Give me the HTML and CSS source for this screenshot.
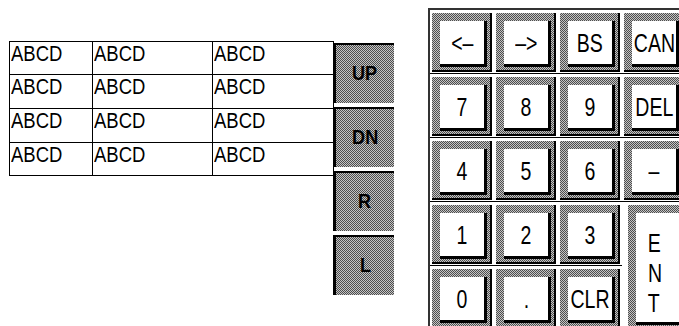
FILE: index.html
```html
<!DOCTYPE html>
<html lang="en">
<head>
  <meta charset="UTF-8">
  <title>Keypad panel</title>
  <link rel="stylesheet" href="styles.css">
</head>
<body>

  <div class="screen">

    <div class="data">
      <div class="cell"><span class="txt">ABCD</span></div>
      <div class="cell"><span class="txt">ABCD</span></div>
      <div class="cell"><span class="txt">ABCD</span></div>
      <div class="cell"><span class="txt">ABCD</span></div>
      <div class="cell"><span class="txt">ABCD</span></div>
      <div class="cell"><span class="txt">ABCD</span></div>
      <div class="cell"><span class="txt">ABCD</span></div>
      <div class="cell"><span class="txt">ABCD</span></div>
      <div class="cell"><span class="txt">ABCD</span></div>
      <div class="cell"><span class="txt">ABCD</span></div>
      <div class="cell"><span class="txt">ABCD</span></div>
      <div class="cell"><span class="txt">ABCD</span></div>
    </div>

    <div class="side">
      <div class="side-btn"><span class="bold">UP</span></div>
      <div class="side-btn"><span class="bold">DN</span></div>
      <div class="side-btn"><span class="bold">R</span></div>
      <div class="side-btn"><span class="bold">L</span></div>
    </div>

    <div class="keypad">
      <div class="slot"><div class="key"><div class="face"><span class="lbl">&lt;&ndash;</span></div></div></div>
      <div class="slot"><div class="key"><div class="face"><span class="lbl">&ndash;&gt;</span></div></div></div>
      <div class="slot"><div class="key"><div class="face"><span class="lbl">BS</span></div></div></div>
      <div class="slot"><div class="key"><div class="face"><span class="lbl">CAN</span></div></div></div>

      <div class="slot"><div class="key"><div class="face"><span class="lbl">7</span></div></div></div>
      <div class="slot"><div class="key"><div class="face"><span class="lbl">8</span></div></div></div>
      <div class="slot"><div class="key"><div class="face"><span class="lbl">9</span></div></div></div>
      <div class="slot"><div class="key"><div class="face"><span class="lbl">DEL</span></div></div></div>

      <div class="slot"><div class="key"><div class="face"><span class="lbl">4</span></div></div></div>
      <div class="slot"><div class="key"><div class="face"><span class="lbl">5</span></div></div></div>
      <div class="slot"><div class="key"><div class="face"><span class="lbl">6</span></div></div></div>
      <div class="slot"><div class="key"><div class="face"><span class="lbl">&ndash;</span></div></div></div>

      <div class="slot"><div class="key"><div class="face"><span class="lbl">1</span></div></div></div>
      <div class="slot"><div class="key"><div class="face"><span class="lbl">2</span></div></div></div>
      <div class="slot"><div class="key"><div class="face"><span class="lbl">3</span></div></div></div>
      <div class="slot ent"><div class="key"><div class="face"><span class="lbl">E</span><span class="lbl">N</span><span class="lbl">T</span></div></div></div>

      <div class="slot"><div class="key"><div class="face"><span class="lbl">0</span></div></div></div>
      <div class="slot"><div class="key"><div class="face"><span class="lbl">.</span></div></div></div>
      <div class="slot"><div class="key"><div class="face"><span class="lbl">CLR</span></div></div></div>
    </div>

  </div>

</body>
</html>
```

FILE: styles.css
```css
html, body {
  margin: 0;
  padding: 0;
  background: #fff;
  overflow: hidden;
}
body {
  width: 679px;
  height: 326px;
  font-family: 'Liberation Sans', Arial, sans-serif;
  color: #000;
}
.screen {
  display: flex;
  align-items: flex-start;
}

/* data table */
.data {
  display: grid;
  grid-template-columns: 82px 119px 120px;
  grid-template-rows: 32px 33px 33px 32px;
  gap: 1px;
  padding: 1px;
  background: #000;
  margin: 41px 0 0 9px;
}
.cell {
  background: #fff;
  padding: 1px 0 0 1px;
  font-size: 22px;
  line-height: 22px;
}
.txt {
  display: inline-block;
  transform: scaleX(0.84);
  transform-origin: left center;
}

/* side buttons */
.side {
  display: flex;
  flex-direction: column;
  gap: 4px;
  margin: 43px 0 0 -1px;
}
.side-btn {
  width: 61px;
  height: 60px;
  box-sizing: border-box;
  border-left: 3px solid #000;
  border-top: 2px solid #000;
  padding-bottom: 3px;
  background-image: repeating-conic-gradient(#4d4d4d 0% 25%, #c4c4c4 0% 50%);
  background-size: 2px 2px;
  display: flex;
  align-items: center;
  justify-content: center;
}
.bold {
  font-weight: bold;
  font-size: 21px;
  transform: scaleX(0.86);
}

/* keypad */
.keypad {
  display: grid;
  grid-template-columns: repeat(4, 64px);
  grid-template-rows: repeat(5, 64px);
  margin: 8px 0 0 34px;
  border-top: 2px solid #333;
  border-left: 2px solid #333;
}
.slot {
  box-sizing: border-box;
  border-bottom: 1px solid #000;
  padding: 3px 0 0 2px;
}
.slot.ent {
  grid-column: 4;
  grid-row: 4 / span 2;
  border-bottom: none;
  padding-left: 6px;
}
.key {
  width: 60px;
  height: 59px;
  box-sizing: border-box;
  border-right: 2px solid #000;
  border-bottom: 2px solid #000;
  padding: 8px 3px 3px 8px;
  background-image: repeating-conic-gradient(#4d4d4d 0% 25%, #c4c4c4 0% 50%);
  background-size: 2px 2px;
}
.ent .key {
  height: 125px;
}
.face {
  height: 100%;
  box-sizing: border-box;
  background: #fff;
  border-right: 3px solid #000;
  border-bottom: 3px solid #000;
  display: flex;
  align-items: center;
  justify-content: center;
}
.ent .face {
  flex-direction: column;
  justify-content: flex-start;
  align-items: flex-start;
  padding: 15px 0 0 10px;
}
.lbl {
  display: inline-block;
  font-size: 25px;
  line-height: 30px;
  transform: scaleX(0.78);
}
```
